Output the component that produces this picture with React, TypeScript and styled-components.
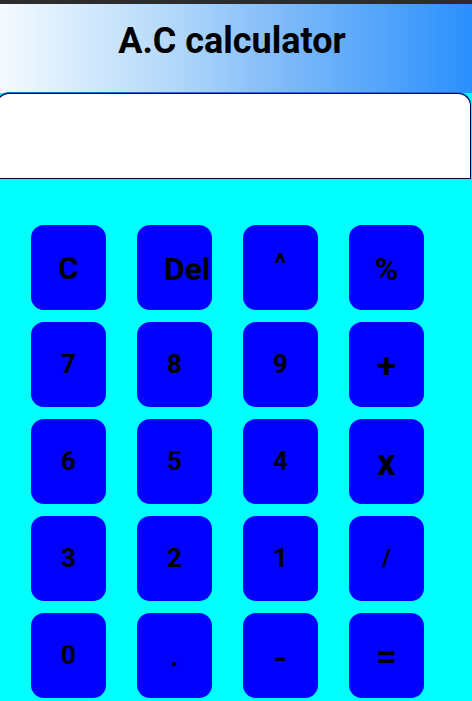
import React from "react";
import styled, { createGlobalStyle } from "styled-components";

const Global = createGlobalStyle`
  html, body {
    margin: 0;
    padding: 0;
    background: #00ffff;
    font-family: Roboto, "Liberation Sans", sans-serif;
    overflow: hidden;
  }
  * { box-sizing: border-box; }
`;

const Page = styled.div`
  width: 472px;
  height: 701px;
  display: flex;
  flex-direction: column;
  overflow: hidden;
  background: #00ffff;
`;

const TopStrip = styled.div`
  height: 4px;
  background: #2c2c2c;
  flex: none;
`;

const Header = styled.header`
  height: 89px;
  flex: none;
  background: linear-gradient(to right, #f4faff 0%, #b6dafb 35%, #7fbaf9 60%, #2a90fd 100%);
  display: flex;
  justify-content: center;
  padding-top: 16px;
  padding-right: 8px;
`;

const Title = styled.h1`
  margin: 0;
  font-family: Roboto, "Liberation Sans", sans-serif;
  font-weight: 700;
  font-size: 36px;
  line-height: 42px;
  color: #000;
`;

const Display = styled.div`
  flex: none;
  height: 86px;
  margin-left: -4px;
  width: 475px;
  background: #fff;
  border: 1px solid #00005a;
  border-bottom-color: #0a0a1a;
  border-radius: 13px 13px 0 0;
  box-shadow: 0 -1px 0 #1f6fe0;
`;

const Keypad = styled.div`
  flex: 1;
  display: grid;
  grid-template-columns: repeat(4, 75px);
  grid-auto-rows: 85px;
  column-gap: 31px;
  row-gap: 12px;
  padding: 46px 0 0 31px;
  background: #00ffff;
`;

const Key = styled.button<{ $size: number; $dy: number; $indent?: number }>`
  width: 75px;
  height: 85px;
  border: none;
  border-radius: 13px;
  background: #0000ff;
  color: #000;
  font-family: Roboto, "Liberation Sans", sans-serif;
  font-weight: 700;
  font-size: ${(p) => p.$size}px;
  line-height: 1;
  display: flex;
  align-items: center;
  justify-content: ${(p) => (p.$indent ? "flex-start" : "center")};
  padding: ${(p) => (p.$dy > 0 ? p.$dy * 2 : 0)}px 0 ${(p) => (p.$dy < 0 ? -p.$dy * 2 : 0)}px ${(p) => p.$indent ?? 0}px;
  overflow: hidden;
  white-space: nowrap;
  cursor: pointer;
`;

type K = { label: string; size: number; dy: number; indent?: number };

const keys: K[] = [
  { label: "C", size: 31, dy: 1 },
  { label: "Del", size: 32, dy: 1, indent: 27 },
  { label: "^", size: 28, dy: -4 },
  { label: "%", size: 32, dy: 1 },
  { label: "7", size: 26, dy: -1 },
  { label: "8", size: 26, dy: -1 },
  { label: "9", size: 26, dy: -1 },
  { label: "+", size: 35, dy: 2 },
  { label: "6", size: 26, dy: -1 },
  { label: "5", size: 26, dy: -1 },
  { label: "4", size: 26, dy: -1 },
  { label: "x", size: 36, dy: 1 },
  { label: "3", size: 26, dy: -1 },
  { label: "2", size: 26, dy: -1 },
  { label: "1", size: 26, dy: -1 },
  { label: "/", size: 23, dy: 0 },
  { label: "0", size: 26, dy: -1 },
  { label: ".", size: 28, dy: 1 },
  { label: "-", size: 34, dy: 1 },
  { label: "=", size: 36, dy: 1 },
];

export default function App() {
  return (
    <>
      <Global />
      <Page>
        <TopStrip />
        <Header>
          <Title>A.C calculator</Title>
        </Header>
        <Display />
        <Keypad>
          {keys.map((k) => (
            <Key key={k.label} $size={k.size} $dy={k.dy} $indent={k.indent}>
              {k.label}
            </Key>
          ))}
        </Keypad>
      </Page>
    </>
  );
}
